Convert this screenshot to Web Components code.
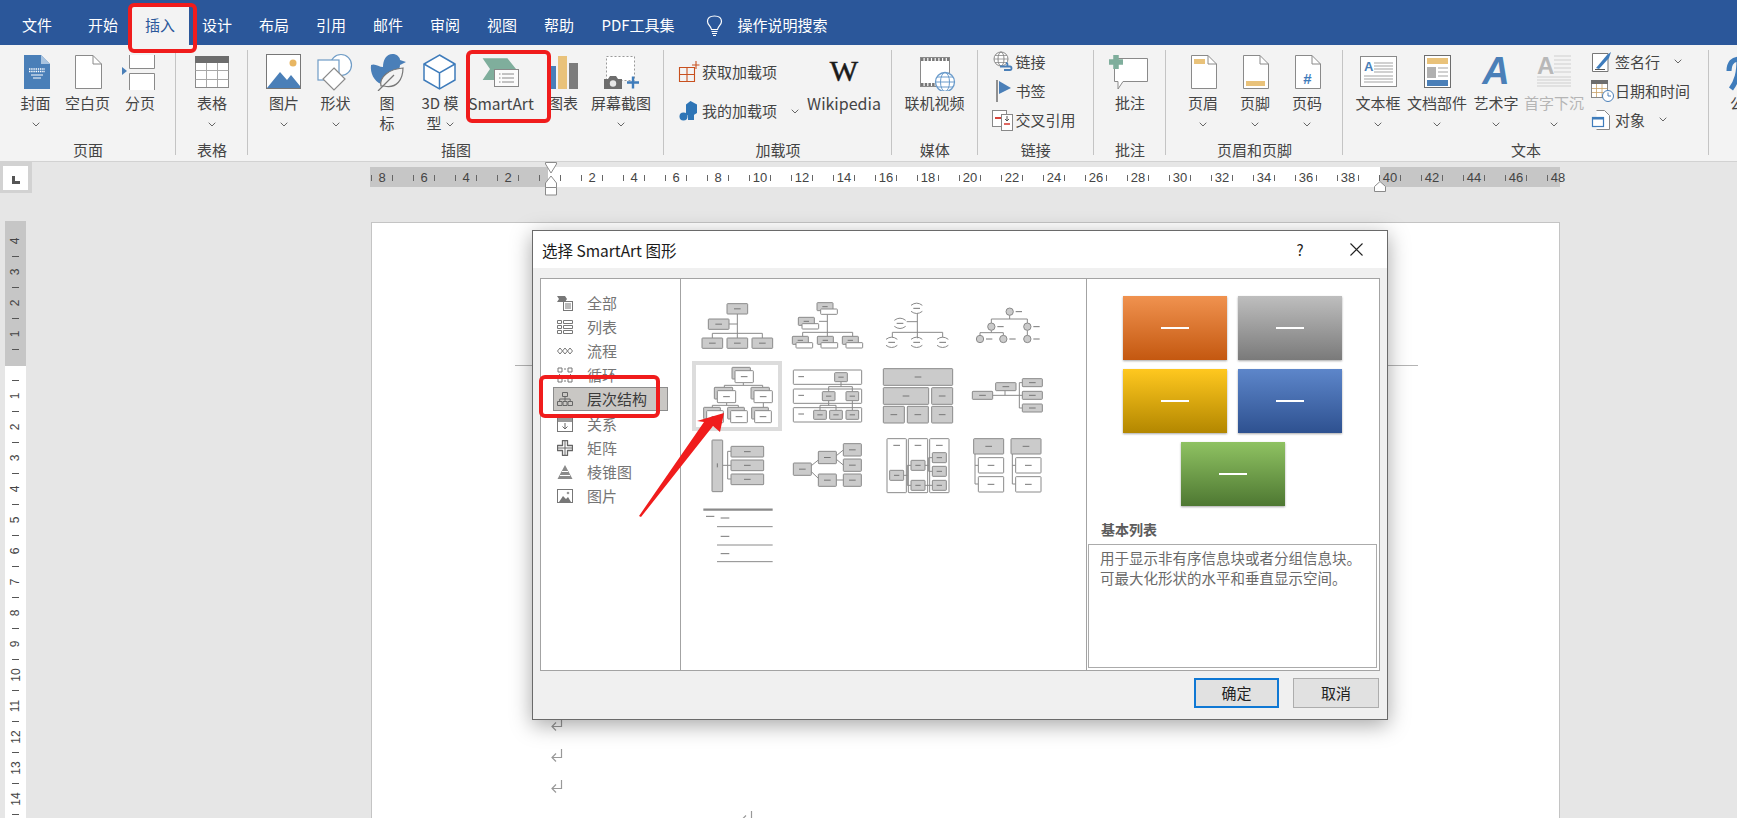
<!DOCTYPE html>
<html lang="zh">
<head>
<meta charset="utf-8">
<title>Word SmartArt</title>
<style>
  html, body { margin: 0; padding: 0; overflow: hidden; background: #e6e6e6; }
  body { font-family: "Noto Sans CJK SC", "Liberation Sans", sans-serif; }
</style>
</head>
<body>
<word-app>
  <tab-bar slot="top"></tab-bar>

  <word-ribbon slot="top">
    <rb-group label="页面" w="176">
      <rb-btn w="53" style="margin-left:9px" label="封面" caret>
        <svg width="44" height="38" viewBox="0 0 44 38"><path d="M10 2H27L36 11V36H10Z" fill="#4a7fb8"/><path d="M27 2L36 11H27Z" fill="#a9c4e0"/><path d="M15 16h16M15 18.5h16" stroke="#fff" stroke-width="1.4" stroke-dasharray="1.4 .8"/><path d="M17 22h12M19 25h8" stroke="#fff" stroke-width="1"/></svg>
      </rb-btn>
      <rb-btn w="51" label="空白页">
        <svg width="44" height="38" viewBox="0 0 44 38"><path d="M9.5 2.5H27L35.5 11V35.5H9.5Z" fill="#fff" stroke="#8a8a8a"/><path d="M27 2.5V11H35.5" fill="none" stroke="#8a8a8a"/></svg>
      </rb-btn>
      <rb-btn w="54" label="分页">
        <svg width="44" height="38" viewBox="0 0 44 38"><path d="M11.500 2V15.500H36.500V2" fill="#fff" stroke="#8a8a8a"/><path d="M11.500 37V20.500H36.500V37" fill="#fff" stroke="#8a8a8a"/><path d="M4 14L9 18L4 22Z" fill="#4a7fb8"/></svg>
      </rb-btn>
    </rb-group>

    <rb-group label="表格" w="72">
      <rb-btn w="72" label="表格" caret>
        <svg width="44" height="38" viewBox="0 0 44 38"><rect x="5.500" y="3.500" width="33" height="31" fill="#fff" stroke="#8a8a8a"/><rect x="5" y="3" width="34" height="7" fill="#6d6d6d"/><path d="M5.500 17.500H38.500M5.500 26.500H38.500M16.500 10V34M27.500 10V34" stroke="#a8a8a8"/></svg>
      </rb-btn>
    </rb-group>

    <rb-group label="插图" w="416">
      <rb-btn w="52" style="margin-left:10px" label="图片" caret>
        <svg width="44" height="38" viewBox="0 0 44 38"><rect x="4.500" y="1.500" width="34" height="34" fill="#fff" stroke="#777"/><path d="M5 35L18 19L25 27L29 22L38 33V35Z" fill="#4a7fb8"/><circle cx="31" cy="10" r="3.500" fill="#e8b662"/></svg>
      </rb-btn>
      <rb-btn w="51" label="形状" caret>
        <svg width="44" height="38" viewBox="0 0 44 38"><circle cx="27" cy="12" r="10.500" fill="#fff" stroke="#6f9cc6" stroke-width="1.200"/><rect x="4" y="7" width="21" height="20" fill="#fff" stroke="#6f9cc6" stroke-width="1.200"/><path d="M20 15L31 26L20 37L9 26Z" fill="#fff" stroke="#8a8a8a" stroke-width="1.200"/></svg>
      </rb-btn>
      <rb-btn w="52" label="图" label2="标">
        <svg width="44" height="38" viewBox="0 0 44 38"><path d="M6 12C10 10 14 14 18 14C18 6 22 0 29 1C33 2 35 5 35 7L41 9L35 12C35 16 32 20 28 22L16 31C9 28 5 20 6 12Z" fill="#4a7fb8"/><path d="M16 33C14 24 24 16 38 15C38 26 32 36 19 33Z" fill="#f3f3f3" stroke="#777" stroke-width="1.200"/><path d="M13 38L29 22" stroke="#777" stroke-width="1.200"/></svg>
      </rb-btn>
      <rb-btn w="54" label="3D 模" label2="型" caret>
        <svg width="44" height="38" viewBox="0 0 44 38"><path d="M21.500 2L37 11V27L21.500 36L6 27V11Z" fill="#fff" stroke="#3f7cbb" stroke-width="1.500"/><path d="M6 11L21.500 20L37 11M21.500 20V36" fill="none" stroke="#3f7cbb" stroke-width="1.500"/></svg>
      </rb-btn>
      <rb-btn w="68" style="font-size:15.5px" label="SmartArt">
        <svg width="44" height="38" viewBox="0 0 44 38"><path d="M3.600 5.300H28.400L37 16L28 27H3.600L11 16Z" fill="#7fae9c"/><rect x="15.500" y="16.500" width="24" height="17" fill="#fbfbfb" stroke="#888"/><path d="M20 21h1.500M23 21h12M20 25h1.500M23 25h12M20 29h1.500M23 29h12" stroke="#8a8a8a"/></svg>
      </rb-btn>
      <rb-btn w="56" label="图表">
        <svg width="44" height="38" viewBox="0 0 44 38"><rect x="7" y="13" width="8" height="23" fill="#4a7fb8"/><rect x="17" y="3" width="9" height="33" fill="#e9c27a"/><rect x="28" y="10" width="9" height="26" fill="#7c7c7c"/></svg>
      </rb-btn>
      <rb-btn w="60" label="屏幕截图" caret>
        <svg width="44" height="38" viewBox="0 0 44 38"><rect x="7.500" y="3.500" width="28" height="24" fill="#fff" stroke="#999" stroke-dasharray="2 2"/><path d="M5 26H9L11 23H17L19 26H23V36H5Z" fill="#6d6d6d"/><circle cx="14" cy="30.500" r="3.200" fill="#e8e8e8"/><path d="M28 29.500H40M34 23.500V35.500" stroke="#3f7cbb" stroke-width="2.400"/></svg>
      </rb-btn>
    </rb-group>

    <rb-group label="加载项" w="228">
      <rb-col style="margin-left:14px;width:126px;padding-top:7.500px;--row-h:39px">
        <rb-row label="获取加载项">
          <svg width="24" height="24" viewBox="0 0 24 24"><path d="M1.500 7.500H16.500V21.500H1.500ZM9 7.500V21.500M1.500 14.500H16.500" fill="none" stroke="#c8501e" stroke-width="1.100"/><path d="M18 1V9M14 5H21.500" stroke="#c8501e" stroke-width="1.100"/></svg>
        </rb-row>
        <rb-row label="我的加载项" caret>
          <svg width="24" height="24" viewBox="0 0 24 24"><path d="M12.500 2L19 5.500V14L12.500 18L8 15.500V5.500Z" fill="#2e75b6"/><circle cx="5.500" cy="17.500" r="4" fill="#2e75b6"/><rect x="10" y="15" width="6" height="6" fill="#2e75b6"/></svg>
        </rb-row>
      </rb-col>
      <rb-btn w="80" label="Wikipedia" style="font-size:16px">
        <span style="display:block;width:44px;height:38px;text-align:center;font:normal 30px/36px 'Liberation Serif',serif;color:#1a1a1a;-webkit-text-stroke:.5px #1a1a1a">W</span>
      </rb-btn>
    </rb-group>

    <rb-group label="媒体" w="85.500">
      <rb-btn w="85" label="联机视频">
        <svg width="44" height="38" viewBox="0 0 44 38"><rect x="7.500" y="4.500" width="29" height="29" fill="#fff" stroke="#8a8a8a"/><path d="M8 6.500H36M8 31.500H26" stroke="#777" stroke-width="3" stroke-dasharray="2.500 1.200"/><circle cx="32" cy="29" r="9.500" fill="#fff" stroke="#6a9bcb" stroke-width="1.300"/><ellipse cx="32" cy="29" rx="4.500" ry="9.500" fill="none" stroke="#6a9bcb"/><path d="M22.500 29H41.500M24 24H40M24 34H40" stroke="#6a9bcb"/></svg>
      </rb-btn>
    </rb-group>

    <rb-group label="链接" w="116.500">
      <rb-col style="margin-left:14px;width:100px;padding-top:2px;--row-h:29px">
        <rb-row label="链接">
          <svg width="24" height="24" viewBox="0 0 24 24"><circle cx="9" cy="9" r="7" fill="#fff" stroke="#8a8a8a"/><ellipse cx="9" cy="9" rx="3" ry="7" fill="none" stroke="#8a8a8a"/><path d="M2 9H16M3 5.500H15M3 12.500H15" stroke="#8a8a8a" stroke-width=".8"/><path d="M8 16.500H14C16 16.500 16 13 14 13M12 20H18C20 20 20 16.500 18 16.500H14" fill="none" stroke="#4a7fb8" stroke-width="1.800"/></svg>
        </rb-row>
        <rb-row label="书签">
          <svg width="24" height="24" viewBox="0 0 24 24"><path d="M5 1V23" stroke="#777" stroke-width="1.600"/><path d="M7 2L19 9L7 15Z" fill="#4a7fb8"/></svg>
        </rb-row>
        <rb-row label="交叉引用">
          <svg width="24" height="24" viewBox="0 0 24 24"><rect x=".5" y="2.500" width="14" height="16" fill="#fff" stroke="#888"/><rect x="9.500" y="6.500" width="11" height="16" fill="#fff" stroke="#888"/><path d="M3 10H9" stroke="#d8433a" stroke-width="2"/><path d="M12 16H18" stroke="#d8433a" stroke-width="1.600"/><path d="M15 8V13M13 11L15 13L17 11" fill="none" stroke="#555"/></svg>
        </rb-row>
      </rb-col>
    </rb-group>

    <rb-group label="批注" w="72">
      <rb-btn w="72" label="批注">
        <svg width="44" height="38" viewBox="0 0 44 38"><path d="M6.500 5.500H39.500V28.500H15L10 36V28.500H6.500Z" fill="#fff" stroke="#8a8a8a" stroke-linejoin="round"/><path d="M1 9H15M8 2V16" stroke="#7fae9c" stroke-width="5.500"/></svg>
      </rb-btn>
    </rb-group>

    <rb-group label="页眉和页脚" w="177">
      <rb-btn w="52" style="margin-left:11px" label="页眉" caret>
        <svg width="44" height="38" viewBox="0 0 44 38"><path d="M10.500 2.500H27L35.500 11V35.500H10.500Z" fill="#fff" stroke="#8a8a8a"/><path d="M27 2.500V11H35.500" fill="none" stroke="#8a8a8a"/><rect x="13" y="6" width="11" height="5" fill="#e9c27a"/></svg>
      </rb-btn>
      <rb-btn w="52" label="页脚" caret>
        <svg width="44" height="38" viewBox="0 0 44 38"><path d="M10.500 2.500H27L35.500 11V35.500H10.500Z" fill="#fff" stroke="#8a8a8a"/><path d="M27 2.500V11H35.500" fill="none" stroke="#8a8a8a"/><rect x="13" y="28" width="19" height="5" fill="#e9c27a"/></svg>
      </rb-btn>
      <rb-btn w="52" label="页码" caret>
        <svg width="44" height="38" viewBox="0 0 44 38"><path d="M10.500 2.500H27L35.500 11V35.500H10.500Z" fill="#fff" stroke="#8a8a8a"/><path d="M27 2.500V11H35.500" fill="none" stroke="#8a8a8a"/><text x="22.500" y="31" text-anchor="middle" font-family="Liberation Sans" font-weight="bold" font-size="15" fill="#3f7cbb">#</text></svg>
      </rb-btn>
    </rb-group>

    <rb-group label="文本" w="366">
      <rb-btn w="62" style="margin-left:4px" label="文本框" caret>
        <svg width="44" height="38" viewBox="0 0 44 38"><rect x="4.500" y="3.500" width="36" height="30" fill="#fff" stroke="#8a8a8a"/><text x="8" y="18" font-family="Liberation Sans" font-weight="bold" font-size="13" fill="#4a7fb8">A</text><path d="M18 10H37M18 13H37M18 16H37M18 19H37M8 23H37M8 26H37M8 29H37" stroke="#a3a3a3"/></svg>
      </rb-btn>
      <rb-btn w="56" label="文档部件" caret>
        <svg width="44" height="38" viewBox="0 0 44 38"><rect x="9.500" y="2.500" width="26" height="32" fill="#fff" stroke="#6d6d6d"/><rect x="12" y="5" width="21" height="6" fill="#e9c27a"/><rect x="12" y="14" width="9" height="11" fill="#b0b0b0"/><path d="M23 15H33M23 19H33M23 23H33" stroke="#a3a3a3"/><rect x="12" y="27" width="21" height="6" fill="#4a7fb8"/></svg>
      </rb-btn>
      <rb-btn w="62" label="艺术字" caret>
        <svg width="44" height="38" viewBox="0 0 44 38"><text x="22" y="31" text-anchor="middle" font-family="Liberation Sans" font-style="italic" font-weight="bold" font-size="38" fill="#4a7fb8">A</text></svg>
      </rb-btn>
      <rb-btn w="54" muted label="首字下沉" caret>
        <svg width="44" height="38" viewBox="0 0 44 38"><text x="5" y="21" font-family="Liberation Sans" font-weight="bold" font-size="24" fill="#b8b8b8">A</text><path d="M22 3H39M22 7H39M22 11H39M22 15H39M22 19H39M5 24H39M5 27H39M5 30H39M5 33H39" stroke="#cfcfcf"/></svg>
      </rb-btn>
      <rb-col style="margin-left:10px;width:118px;padding-top:2px;--row-h:29px">
        <rb-row label="签名行" caret>
          <svg width="24" height="24" viewBox="0 0 24 24"><path d="M1.500 3.500H17V21.500H1.500Z" fill="#fff" stroke="#777"/><path d="M5 18L16 5L20 2L18 8L8 19Z" fill="#3f7cbb"/><path d="M4 19.500H14" stroke="#555"/></svg>
        </rb-row>
        <rb-row label="日期和时间">
          <svg width="24" height="24" viewBox="0 0 24 24"><rect x=".5" y="1.500" width="16" height="17" fill="#fff" stroke="#888"/><rect x="0" y="1" width="17" height="4" fill="#6d6d6d"/><path d="M1 9.500H16M1 13.500H16M5.500 5V18M11 5V18" stroke="#c9a267" stroke-width=".8"/><circle cx="17" cy="17" r="5.500" fill="#fff" stroke="#4a7fb8"/><path d="M17 13.500V17H20" fill="none" stroke="#4a7fb8"/></svg>
        </rb-row>
        <rb-row label="对象" caret>
          <svg width="24" height="24" viewBox="0 0 24 24"><path d="M5.500 2.500H13.500L18.500 7.500V21.500H5.500" fill="#fff" stroke="#888"/><rect x="1.500" y="9.500" width="11" height="9" fill="#fff" stroke="#3f7cbb" stroke-width="1.200"/><path d="M1.500 10.500H12.500" stroke="#3f7cbb" stroke-width="2"/></svg>
        </rb-row>
      </rb-col>
    </rb-group>

    <rb-group label="" w="72" last>
      <rb-btn w="72" label="公式" caret>
        <svg width="44" height="38" viewBox="0 0 44 38"><path d="M6 18C6 10 10 6 16 6H44M16 6C16 20 14 28 8 36M30 6V36" fill="none" stroke="#3f7cbb" stroke-width="5"/></svg>
      </rb-btn>
    </rb-group>
  </word-ribbon>

  <word-workspace slot="main">
    <ruler-corner slot="corner"></ruler-corner>
    <ruler-h slot="hruler"></ruler-h>
    <ruler-v slot="vruler"></ruler-v>
    <doc-page slot="page">
      <para-mark></para-mark>
      <para-mark></para-mark>
      <para-mark></para-mark>
      <para-mark style="margin-left:190px"></para-mark>
    </doc-page>
  </word-workspace>

  <smartart-dialog slot="over" heading="选择 SmartArt 图形">
    <sa-cat slot="cats" label="全部"><svg width="16" height="16" viewBox="0 0 16 16"><path d="M0 1H8L10 4L8 7H0L2 4Z" fill="#777"/><rect x="6.500" y="6.500" width="9" height="9" fill="#fff" stroke="#777"/><path d="M8 9H14M8 11H14M8 13H14" stroke="#777"/></svg></sa-cat>
    <sa-cat slot="cats" label="列表"><svg width="16" height="16" viewBox="0 0 16 16"><path d="M.5 1.500H4.500V4.500H.5ZM6.500 1.500H15.500V4.500H6.500ZM.5 6.500H4.500V9.500H.5ZM6.500 6.500H15.500V9.500H6.500ZM.5 11.500H4.500V14.500H.5ZM6.500 11.500H15.500V14.500H6.500Z" fill="none" stroke="#777"/></svg></sa-cat>
    <sa-cat slot="cats" label="流程"><svg width="16" height="16" viewBox="0 0 16 16"><path d="M3 5L5.500 8L3 11L.5 8ZM8 5L10.500 8L8 11L5.500 8ZM13 5L15.500 8L13 11L10.500 8Z" fill="#fff" stroke="#777"/></svg></sa-cat>
    <sa-cat slot="cats" label="循环"><svg width="16" height="16" viewBox="0 0 16 16"><path d="M1 1H5V5H1ZM11 1H15V5H11ZM1 11H5V15H1ZM11 11H15V15H11ZM7 2H9M7 14H9M2.500 7V9M13.500 7V9" fill="none" stroke="#777"/></svg></sa-cat>
    <sa-cat slot="cats" label="层次结构" selected><svg width="16" height="16" viewBox="0 0 16 16"><path d="M5.500 1.500H10.500V5.500H5.500ZM.5 10.500H5V14.500H.5ZM6 10.500H10V14.500H6ZM11 10.500H15.500V14.500H11ZM8 5.500V10.500M2.700 10.500V8H13.200V10.500" fill="none" stroke="#666"/></svg></sa-cat>
    <sa-cat slot="cats" label="关系"><svg width="16" height="16" viewBox="0 0 16 16"><rect x=".5" y=".5" width="15" height="15" fill="#fff" stroke="#777"/><rect x="1" y="1" width="14" height="5" fill="#999"/><path d="M8 7V13M5.500 10.500L8 13L10.500 10.500" fill="none" stroke="#666"/></svg></sa-cat>
    <sa-cat slot="cats" label="矩阵"><svg width="16" height="16" viewBox="0 0 16 16"><path d="M5.500 .5H10.500V5.500H15.500V10.500H10.500V15.500H5.500V10.500H.5V5.500H5.500Z" fill="#fff" stroke="#666" stroke-width="1.300" stroke-linejoin="round"/><path d="M8 1V15M1 8H15" stroke="#666"/></svg></sa-cat>
    <sa-cat slot="cats" label="棱锥图"><svg width="16" height="16" viewBox="0 0 16 16"><path d="M8 1L15.500 15H.5Z" fill="#8a8a8a"/><path d="M5 7.500H11M3 11.500H13" stroke="#fff" stroke-width="1.200"/></svg></sa-cat>
    <sa-cat slot="cats" label="图片"><svg width="16" height="16" viewBox="0 0 16 16"><rect x=".5" y="1.500" width="15" height="13" fill="#fff" stroke="#777"/><path d="M2 14L6 8L9 11L11 9L14 14Z" fill="#777"/><circle cx="11" cy="5" r="1.300" fill="#999"/></svg></sa-cat>

    <sa-thumb slot="gallery" i="0"></sa-thumb>
    <sa-thumb slot="gallery" i="1"></sa-thumb>
    <sa-thumb slot="gallery" i="2"></sa-thumb>
    <sa-thumb slot="gallery" i="3"></sa-thumb>
    <sa-thumb slot="gallery" i="4" selected></sa-thumb>
    <sa-thumb slot="gallery" i="5"></sa-thumb>
    <sa-thumb slot="gallery" i="6"></sa-thumb>
    <sa-thumb slot="gallery" i="7"></sa-thumb>
    <sa-thumb slot="gallery" i="8"></sa-thumb>
    <sa-thumb slot="gallery" i="9"></sa-thumb>
    <sa-thumb slot="gallery" i="10"></sa-thumb>
    <sa-thumb slot="gallery" i="11"></sa-thumb>
    <sa-thumb slot="gallery" i="12"></sa-thumb>

    <sa-preview slot="preview" title-text="基本列表" text="用于显示非有序信息块或者分组信息块。可最大化形状的水平和垂直显示空间。"></sa-preview>
  </smartart-dialog>

  <red-box slot="over" style="left:128px;top:3px;width:69px;height:50px"></red-box>
  <red-box slot="over" style="left:466px;top:50px;width:85px;height:73px"></red-box>
  <red-box slot="over" style="left:539px;top:375px;width:121px;height:43px"></red-box>
  <red-arrow slot="over"></red-arrow>
</word-app>

<script>
class WordApp extends HTMLElement {
  constructor() {
    super();
    this.attachShadow({ mode: 'open' });
    this.shadowRoot.innerHTML = `
      <style>
        :host { display: flex; flex-direction: column; position: relative; width: 1737px; height: 818px; overflow: hidden; background: #e6e6e6; color: #444; font: 15px/20px "Noto Sans CJK SC", "Liberation Sans", sans-serif; }
      </style>
      <slot name="top"></slot>
      <slot name="main"></slot>
      <slot name="over"></slot>`;
  }
}

class TabBar extends HTMLElement {
  constructor() {
    super();
    this.attachShadow({ mode: 'open' });
    const names = ['开始', '插入', '设计', '布局', '引用', '邮件', '审阅', '视图', '帮助'];
    this.shadowRoot.innerHTML = `
      <style>
        :host { display: flex; height: 45px; box-sizing: border-box; padding: 5px 0 0 8.5px; background: #2b579a; color: #fff; font-size: 15px; }
        .t { width: 57px; height: 40px; line-height: 40px; text-align: center; flex: none; }
        .t.on { background: #f3f3f3; color: #2b579a; }
        .file { margin-right: 9px; }
        .pdf { width: 101px; }
        .bulb { margin: 0 15px 0 17px; padding-top: 10px; flex: none; }
        .search { line-height: 40px; }
      </style>
      <div class="t file">文件</div>
      ${names.map(n => `<div class="t ${n === '插入' ? 'on' : ''}">${n}</div>`).join('')}
      <div class="t pdf">PDF工具集</div>
      <div class="bulb"><svg width="17" height="21" viewBox="0 0 17 21"><path d="M5.500 14.500C5 11 1.500 10 1.500 6.500C1.500 3 4.500 1 8.500 1S15.500 3 15.500 6.500C15.500 10 12 11 11.500 14.500Z" fill="none" stroke="#fff" stroke-width="1.200"/><path d="M5.500 16.500H11.500M6 18.500H11M7 20.500H10" stroke="#fff" stroke-width="1.200"/></svg></div>
      <div class="search">操作说明搜索</div>`;
  }
}

class WordRibbon extends HTMLElement {
  constructor() {
    super();
    this.attachShadow({ mode: 'open' });
    this.shadowRoot.innerHTML = `
      <style>
        :host { display: flex; height: 117px; box-sizing: border-box; background: #f3f3f3; border-bottom: 1px solid #d2d2d2; overflow: hidden; color: #444; }
      </style>
      <slot></slot>`;
  }
}

class RbGroup extends HTMLElement {
  constructor() {
    super();
    this.attachShadow({ mode: 'open' });
  }
  connectedCallback() {
    const w = this.getAttribute('w');
    const sep = this.hasAttribute('last') ? 'none' : 'linear-gradient(#c4c4c4,#c4c4c4) right 5px / 1px 105px no-repeat';
    this.shadowRoot.innerHTML = `
      <style>
        :host { display: flex; flex-direction: column; flex: none; width: ${w}px; height: 116px; box-sizing: border-box; background: ${sep}; }
        .items { display: flex; flex: 1; min-height: 0; }
        .name { height: 20px; line-height: 20px; margin-bottom: 1px; text-align: center; white-space: nowrap; }
      </style>
      <div class="items"><slot></slot></div>
      <div class="name">${this.getAttribute('label')}</div>`;
  }
}

const CARET = `<svg width="8" height="5" viewBox="0 0 8 5"><path d="M.7 .7L4 4L7.300 .7" fill="none" stroke="#666" stroke-width="1"/></svg>`;

class RbBtn extends HTMLElement {
  constructor() {
    super();
    this.attachShadow({ mode: 'open' });
  }
  connectedCallback() {
    const l2 = this.getAttribute('label2') || '';
    const caret = this.hasAttribute('caret') ? `<span class="c">${CARET}</span>` : '';
    this.shadowRoot.innerHTML = `
      <style>
        :host { display: flex; flex-direction: column; align-items: center; flex: none; width: ${this.getAttribute('w')}px; padding-top: 8px; box-sizing: border-box; white-space: nowrap; ${this.hasAttribute('muted') ? 'color:#b5b5b5;' : ''} }
        .icon { width: 44px; height: 38px; flex: none; }
        .line { height: 20px; line-height: 20px; margin-top: 2px; display: flex; justify-content: center; align-items: center; }
        .line + .line { margin-top: 0; }
        .c { display: inline-flex; margin-left: ${l2 ? 4 : 0}px; padding-top: 2px; }
      </style>
      <div class="icon"><slot></slot></div>
      <div class="line">${this.getAttribute('label')}</div>
      <div class="line">${l2}${caret}</div>`;
  }
}

class RbCol extends HTMLElement {
  constructor() {
    super();
    this.attachShadow({ mode: 'open' });
    this.shadowRoot.innerHTML = `
      <style>:host { display: flex; flex-direction: column; flex: none; box-sizing: border-box; }</style>
      <slot></slot>`;
  }
}

class RbRow extends HTMLElement {
  constructor() {
    super();
    this.attachShadow({ mode: 'open' });
  }
  connectedCallback() {
    const caret = this.hasAttribute('caret') ? `<span class="c">${CARET}</span>` : '';
    this.shadowRoot.innerHTML = `
      <style>
        :host { display: flex; align-items: center; height: var(--row-h, 30px); flex: none; white-space: nowrap; }
        .icon { width: 24px; height: 24px; flex: none; }
        .c { display: inline-flex; margin-left: 14px; }
      </style>
      <div class="icon"><slot></slot></div>
      <span>${this.getAttribute('label')}</span>${caret}`;
  }
}

class WordWorkspace extends HTMLElement {
  constructor() {
    super();
    this.attachShadow({ mode: 'open' });
    this.shadowRoot.innerHTML = `
      <style>
        :host { display: flex; flex-direction: column; flex: 1; min-height: 0; }
        .head { display: flex; height: 60px; flex: none; }
        .body { display: flex; flex: 1; min-height: 0; }
        ::slotted([slot=hruler]) { margin-left: 338px; margin-top: 5px; }
        ::slotted([slot=vruler]) { margin-left: 5px; margin-top: -1px; }
        ::slotted([slot=page]) { margin-left: 345px; }
      </style>
      <div class="head"><slot name="corner"></slot><slot name="hruler"></slot></div>
      <div class="body"><slot name="vruler"></slot><slot name="page"></slot></div>`;
  }
}

class RulerCorner extends HTMLElement {
  constructor() {
    super();
    this.attachShadow({ mode: 'open' });
    this.shadowRoot.innerHTML = `
      <style>
        :host { display: flex; flex: none; width: 32px; height: 31px; box-sizing: border-box; padding: 4px 4px 3px 3px; background: #d2d2d2; }
        div { flex: 1; background: #fff; display: flex; align-items: center; justify-content: center; padding: 3px 0 0 0; }
      </style>
      <div><svg width="8" height="8" viewBox="0 0 8 8"><path d="M0 0H3V5H8V8H0Z" fill="#555"/></svg></div>`;
  }
}

class RulerH extends HTMLElement {
  constructor() {
    super();
    this.attachShadow({ mode: 'open' });
    const nums = ['8', '6', '4', '2', ''];
    for (let n = 2; n <= 48; n += 2) nums.push(String(n));
    this.shadowRoot.innerHTML = `
      <style>
        :host { display: block; position: relative; flex: none; width: 1190px; height: 20px; background: linear-gradient(to right, #c6c6c6 178px, #fff 178px, #fff 1010px, #c6c6c6 1010px); font: 13px/20px "Liberation Sans", sans-serif; color: #444; }
        .track { display: flex; margin-left: -9px; }
        .cell { flex: none; width: 42px; box-sizing: border-box; padding: 0 10px; display: flex; justify-content: space-between; align-items: center; height: 21px; }
        i { width: 1px; height: 6px; background: #666; display: block; }
        .mk { position: absolute; }
      </style>
      <div class="track">
        ${nums.map((n, k) => `<div class="cell"><i></i><span>${n}</span>${k === nums.length - 1 ? '<i style="visibility:hidden"></i>' : '<i></i>'}</div>`).join('')}
      </div>
      <svg class="mk" style="left:175px;top:-5px" width="12" height="34" viewBox="0 0 12 34"><path d="M.5 .5H11.500V2L6 11L.5 2Z M6 14L11.500 21V25.500H.5V21Z M.5 25.500H11.500V33H.5Z" fill="#fff" stroke="#8a8a8a"/></svg>
      <svg class="mk" style="left:1004px;top:14px" width="12" height="11" viewBox="0 0 12 11"><path d="M6 .5L11.500 5.500V10.500H.5V5.500Z" fill="#fff" stroke="#8a8a8a"/></svg>`;
  }
}

class RulerV extends HTMLElement {
  constructor() {
    super();
    this.attachShadow({ mode: 'open' });
    const nums = ['4', '3', '2', '1', ''];
    for (let n = 1; n <= 15; n++) nums.push(String(n));
    this.shadowRoot.innerHTML = `
      <style>
        :host { display: block; flex: none; width: 21px; padding-top: 12px; box-sizing: border-box; height: 600px; overflow: hidden; background: linear-gradient(#c6c6c6 145px, #fff 145px); font: 12px/16px "Liberation Sans", sans-serif; color: #444; }
        .slot { height: 15.5px; display: flex; align-items: center; justify-content: center; }
        span { transform: rotate(-90deg); display: block; white-space: nowrap; }
        i { width: 7px; height: 1px; background: #555; display: block; }
      </style>
      ${nums.map(n => `<div class="slot"><span>${n}</span></div><div class="slot"><i></i></div>`).join('')}`;
  }
}

class DocPage extends HTMLElement {
  constructor() {
    super();
    this.attachShadow({ mode: 'open' });
    this.shadowRoot.innerHTML = `
      <style>
        :host { display: block; flex: none; width: 1189px; height: 620px; box-sizing: border-box; background: #fff; border: 1px solid #c4c4c4; }
        .rule { margin: 142px 0 0 143px; width: 903px; height: 1px; background: #b4b4b4; }
        .paras { margin: 342px 0 0 178px; }
      </style>
      <div class="rule"></div>
      <div class="paras"><slot></slot></div>`;
  }
}

class ParaMark extends HTMLElement {
  constructor() {
    super();
    this.attachShadow({ mode: 'open' });
    this.shadowRoot.innerHTML = `
      <style>:host { display: block; height: 31px; box-sizing: border-box; padding-top: 8px; }</style>
      <svg width="14" height="16" viewBox="0 0 14 16" style="display:block"><path d="M11.500 2V10.500H2M6 6.500L2 10.500L6 14.500" fill="none" stroke="#999" stroke-width="1.200"/></svg>`;
  }
}

class SmartartDialog extends HTMLElement {
  constructor() {
    super();
    this.attachShadow({ mode: 'open' });
  }
  connectedCallback() {
    this.shadowRoot.innerHTML = `
      <style>
        :host { display: flex; flex-direction: column; position: absolute; left: 532px; top: 230px; width: 856px; height: 490px; box-sizing: border-box; background: #f0f0f0; border: 1px solid #6a6a6a; box-shadow: 0 5px 20px rgba(0,0,0,.35); color: #1a1a1a; }
        .head { display: flex; align-items: center; height: 37px; flex: none; background: #fff; padding-left: 9px; font-size: 15.5px; }
        .head .ttl { flex: 1; }
        .q { width: 14px; text-align: center; margin-right: 43px; font-size: 15px; color: #222; }
        .x { margin-right: 24px; display: flex; }
        .panels { display: flex; height: 393px; margin: 10px 7px 0 7px; box-sizing: border-box; border: 1px solid #a3a3a3; background: #fff; flex: none; }
        .cats { width: 140px; flex: none; box-sizing: border-box; border-right: 1px solid #a3a3a3; padding-top: 12px; }
        .gallery { width: 406px; flex: none; box-sizing: border-box; border-right: 1px solid #a3a3a3; padding: 12px 0 0 11px; display: grid; grid-template-columns: repeat(4, 90px); grid-auto-rows: 70px; align-content: start; }
        .preview { flex: 1; display: flex; min-width: 0; }
        .foot { display: flex; justify-content: flex-end; gap: 14px; padding: 7px 8px 0 0; }
        button { font: inherit; width: 86px; height: 30px; box-sizing: border-box; background: #e1e1e1; border: 1px solid #adadad; color: #222; padding: 0; }
        button.ok { border: 2px solid #0f78d4; width: 85px; }
      </style>
      <div class="head">
        <div class="ttl">${this.getAttribute('heading')}</div>
        <div class="q">?</div>
        <div class="x"><svg width="13" height="13" viewBox="0 0 13 13"><path d="M.5 .5L12.500 12.500M12.500 .5L.5 12.500" stroke="#222" stroke-width="1.100"/></svg></div>
      </div>
      <div class="panels">
        <div class="cats"><slot name="cats"></slot></div>
        <div class="gallery"><slot name="gallery"></slot></div>
        <div class="preview"><slot name="preview"></slot></div>
      </div>
      <div class="foot"><button class="ok">确定</button><button>取消</button></div>`;
  }
}

class SaCat extends HTMLElement {
  constructor() {
    super();
    this.attachShadow({ mode: 'open' });
  }
  connectedCallback() {
    const on = this.hasAttribute('selected');
    this.shadowRoot.innerHTML = `
      <style>
        :host { display: flex; align-items: center; height: 24.1px; margin-left: 12px; margin-right: 12px; box-sizing: border-box; color: ${on ? '#3a3a3a' : '#757575'}; ${on ? 'background:#c9c7c4;outline:1px solid #8c8c8c;outline-offset:-1px;' : ''} }
        .icon { width: 16px; height: 16px; margin: 0 14px 0 4px; flex: none; }
        .icon ::slotted(svg) { display: block; }
      </style>
      <div class="icon"><slot></slot></div>
      <span>${this.getAttribute('label')}</span>`;
  }
}

const STROKE = '#8a8a8a';
const dash = (x, y, w) => `<path d="M${x} ${y}h${w}" stroke="#777" stroke-width="3"/>`;
const box = (fill) => (x, y, w, h, d = 20) =>
  `<rect x="${x}" y="${y}" width="${w}" height="${h}" rx="2" fill="${fill}" stroke="${STROKE}" stroke-width="3"/>` +
  (d ? dash(x + w / 2 - d / 2, y + h / 2, d) : '');
const G = box('#cbcbcb');
const W = box('#fff');
const L = (d, sw = 3) => `<path d="${d}" fill="none" stroke="${STROKE}" stroke-width="${sw}"/>`;
const C = (x, y) => `<circle cx="${x}" cy="${y}" r="11" fill="#cbcbcb" stroke="${STROKE}" stroke-width="3"/>` + dash(x + 18, y, 19);
const ARC = (x, y) => `<path d="M${x - 17} ${y - 9}Q${x} ${y - 22} ${x + 17} ${y - 9}M${x - 17} ${y + 9}Q${x} ${y + 22} ${x + 17} ${y + 9}" fill="none" stroke="${STROKE}" stroke-width="3"/>` + dash(x - 10, y, 20);
const pair = (x, y) => G(x, y, 48, 24, 16) + W(x + 11, y + 19, 50, 16, 0);
const stack = (x, y, bw = 55) => G(x, y, bw, 35, 0) + W(x + 9, y + 10, bw, 36);

const THUMBS = [
  L('M172 102V174M147 132H172M97 174V160H247V174') + G(141, 71, 62, 31) + G(85, 117, 62, 31) + G(66, 174, 62, 31) + G(141, 174, 62, 31) + G(216, 174, 62, 31),
  L('M442 103V169M417 124H442M368 169V157H518V169') + pair(411, 68) + pair(355, 112) + pair(337, 169) + pair(412, 169) + pair(487, 169),
  L('M712 100V175M680 125H712M637 172V157H788V172') + ARC(710, 85) + ARC(660, 130) + ARC(635, 187) + ARC(710, 187) + ARC(788, 187),
  L('M989 106V117M934 129V117H1042V129M1042 151V166M934 151V158M900 166V158H970V166') + C(989, 95) + C(934, 140) + C(1042, 140) + C(900, 177) + C(970, 177) + C(1042, 177),

  L('M190 308V316M133 322V316H248V322M140 368V376M97 382V376H175V382M250 368V382') + stack(156, 262) + stack(103, 322) + stack(213, 322) + stack(71, 382, 50) + stack(143, 382, 50) + stack(215, 382, 50),
  W(340, 270, 205, 43, 0) + W(340, 327, 205, 43, 0) + W(340, 383, 205, 43, 0) + dash(355, 290, 17) + dash(355, 346, 17) + dash(355, 402, 17) +
    L('M483 305V320M446 335V320H517V335M446 362V376M420 391V376H468V391M517 362V391') + G(464, 278, 38, 27, 16) + G(427, 335, 38, 27, 16) + G(498, 335, 38, 27, 16) + G(401, 391, 38, 27, 16) + G(449, 391, 38, 27, 16) + G(498, 391, 38, 27, 16),
  G(610, 266, 208, 50) + G(610, 323, 136, 50) + G(755, 323, 63, 50) + G(610, 379, 63, 50) + G(682, 379, 63, 50) + G(755, 379, 63, 50),
  L('M938 346H1027M975 332V346M1027 308H1018V384H1027') + G(877, 334, 61, 24) + G(947, 308, 61, 24) + G(1027, 296, 60, 24) + G(1027, 334, 60, 24) + G(1027, 372, 60, 24),

  L('M128 556H143M153 514H143V597H153M143 556H153') + G(96, 480, 32, 155, 0) + `<path d="M112 550V562" stroke="#777" stroke-width="3"/>` + G(153, 499, 98, 32) + G(153, 540, 98, 32) + G(153, 582, 98, 32),
  L('M394 557L415 540M394 575L415 595M469 527L490 510M469 538L490 555M469 600H490') + G(340, 549, 54, 37) + G(415, 514, 54, 37) + G(415, 582, 54, 37) + G(490, 491, 54, 37) + G(490, 537, 54, 37) + G(490, 582, 54, 37),
  W(621, 476, 58, 162, 0) + W(685, 476, 58, 162, 0) + W(749, 476, 58, 162, 0) + dash(640, 496, 20) + dash(704, 496, 20) + dash(768, 496, 20) +
    L('M671 586H682M693 556H682V616H693M735 556H746M757 533H746V574H757M735 616H757') + G(629, 571, 42, 30, 16) + G(693, 541, 42, 30, 16) + G(693, 601, 42, 30, 16) + G(757, 518, 42, 30, 16) + G(757, 559, 42, 30, 16) + G(757, 601, 42, 30, 16),
  L('M885 522V612H895M885 556H895M997 522V612H1007M997 556H1007') + G(881, 476, 90, 46) + G(993, 476, 90, 46) + W(895, 533, 76, 46) + W(895, 590, 76, 46) + W(1007, 533, 76, 46) + W(1007, 590, 76, 46),

  L('M70 689H278', 7) + dash(78, 709, 25) + dash(122, 714, 26) + L('M111 740H278') + dash(122, 769, 26) + L('M111 795H278') + dash(122, 821, 26) + L('M111 845H278')
];

class SaThumb extends HTMLElement {
  constructor() {
    super();
    this.attachShadow({ mode: 'open' });
  }
  connectedCallback() {
    const i = +this.getAttribute('i');
    const x0 = 36 + 270 * (i % 4);
    const y0 = 33 + 210 * Math.floor(i / 4);
    this.shadowRoot.innerHTML = `
      <style>
        :host { display: block; width: 90px; height: 70px; ${this.hasAttribute('selected') ? 'box-shadow: inset 0 0 0 4px #dcdcdc;' : ''} }
        svg { display: block; }
      </style>
      <svg width="90" height="70" viewBox="${x0} ${y0} 270 210">${THUMBS[i]}</svg>`;
  }
}

class SaPreview extends HTMLElement {
  constructor() {
    super();
    this.attachShadow({ mode: 'open' });
  }
  connectedCallback() {
    const sw = ['#f0924f,#c45810', '#bebebe,#7a7a7a', '#ffc81f,#b38700', '#5d86ca,#2e5190', '#8fc262,#4e7832'];
    this.shadowRoot.innerHTML = `
      <style>
        :host { display: flex; flex-direction: column; flex: 1; box-sizing: border-box; padding: 17px 2px 2px 1px; }
        .swatches { display: flex; flex-wrap: wrap; justify-content: center; gap: 9px 11px; width: 219px; margin: 0 auto; }
        .s { width: 104px; height: 64px; display: flex; align-items: center; justify-content: center; box-shadow: 0 1px 2px rgba(0,0,0,.35); }
        .s i { width: 28px; height: 2px; background: #fff; display: block; }
        h4 { margin: 13px 0 5px 13px; font: bold 14px/20px "Noto Sans CJK SC", sans-serif; color: #5c5c5c; }
        .desc { flex: 1; border: 1px solid #ababab; padding: 3px 4px 0 11px; line-height: 20px; font-size: 14.500px; color: #6a6a6a; }
      </style>
      <div class="swatches">${sw.map(c => `<div class="s" style="background:linear-gradient(${c})"><i></i></div>`).join('')}</div>
      <h4>${this.getAttribute('title-text')}</h4>
      <div class="desc">${this.getAttribute('text')}</div>`;
  }
}

class RedBox extends HTMLElement {
  constructor() {
    super();
    this.attachShadow({ mode: 'open' });
    this.shadowRoot.innerHTML = `<style>:host { display: block; position: absolute; box-sizing: border-box; border: 4px solid #f01c1c; border-radius: 6px; }</style>`;
  }
}

class RedArrow extends HTMLElement {
  constructor() {
    super();
    this.attachShadow({ mode: 'open' });
    this.shadowRoot.innerHTML = `
      <style>:host { display: block; position: absolute; left: 630px; top: 405px; width: 100px; height: 120px; }</style>
      <svg width="100" height="120" viewBox="630 405 100 120"><path d="M724 413L720 432L713 426L641 517L639 516L704 422L697 421Z" fill="#f01c1c"/></svg>`;
  }
}

customElements.define('word-app', WordApp);
customElements.define('tab-bar', TabBar);
customElements.define('word-ribbon', WordRibbon);
customElements.define('rb-group', RbGroup);
customElements.define('rb-btn', RbBtn);
customElements.define('rb-col', RbCol);
customElements.define('rb-row', RbRow);
customElements.define('word-workspace', WordWorkspace);
customElements.define('ruler-corner', RulerCorner);
customElements.define('ruler-h', RulerH);
customElements.define('ruler-v', RulerV);
customElements.define('doc-page', DocPage);
customElements.define('para-mark', ParaMark);
customElements.define('smartart-dialog', SmartartDialog);
customElements.define('sa-cat', SaCat);
customElements.define('sa-thumb', SaThumb);
customElements.define('sa-preview', SaPreview);
customElements.define('red-box', RedBox);
customElements.define('red-arrow', RedArrow);
</script>
</body>
</html>
